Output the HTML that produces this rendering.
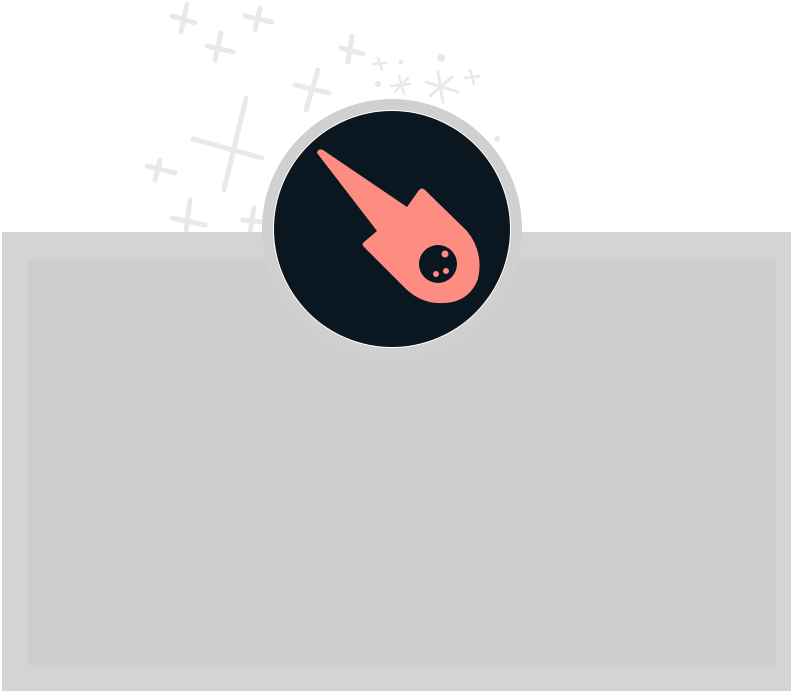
<!DOCTYPE html>
<html><head><style>
html,body{margin:0;padding:0;background:#fff;width:796px;height:693px;overflow:hidden}
</style></head><body>
<svg width="796" height="693" viewBox="0 0 796 693" xmlns="http://www.w3.org/2000/svg">
<g stroke="#e9e9e9" stroke-width="5" stroke-linecap="round" fill="none">
<path d="M187 4 L181 32 M172 16 L195 23"/>
<path d="M260 8 L255 30 M245 16 L272 22"/>
<path d="M221 33 L215 60 M207 46 L233 52"/>
<path d="M352 36 L348 62 M341 48 L363 54"/>
<path d="M318 70 L306 110 M295 85 L329 93"/>
<path d="M246 98 L224 190 M193 139 L262 158"/>
<path d="M160 160 L155 180 M147 166 L175 173"/>
<path d="M190 200 L186 232 M172 218 L205 225"/>
<path d="M254 208 L250 232 M243 220 L263 222"/>
<path d="M438 72 L443 102 M426 82 L458 92 M430 96 L452 77" stroke-width="3"/>
<path d="M399 76 L404 94 M391 86 L410 84 M395 92 L408 78" stroke-width="2.5"/>
<path d="M378 58 L382 70 M373 64 L386 63" stroke-width="2.5"/>
<path d="M470 70 L474 84 M465 78 L479 76" stroke-width="2.5"/>
</g>
<g fill="#e9e9e9"><circle cx="441" cy="58" r="4"/><circle cx="401" cy="62" r="2.5"/><circle cx="378" cy="84" r="3"/><circle cx="497" cy="139" r="3"/></g>
<rect x="2" y="232" width="789" height="459" fill="#d4d4d4"/>
<rect x="28" y="259" width="748" height="406" fill="#cecece"/>
<circle cx="392" cy="229" r="130" fill="#d0d0d0"/>
<circle cx="392" cy="229" r="119" fill="#ffffff"/>
<circle cx="392" cy="229" r="118" fill="#0a1620"/>
<path d="M317 153 Q318 148 323 150 L407 207 L419 190 Q422 187 425 190 L467 231 Q484 252 478 279 Q468 305 437 303 Q420 302 406 289 L364 247 Q361 244 364 242 L377 231 Z" fill="#fd8c83"/>
<circle cx="438" cy="264" r="19" fill="#0a1620"/>
<g fill="#fd8c83"><circle cx="445" cy="254" r="3.5"/><circle cx="446" cy="271" r="3"/><circle cx="436" cy="274" r="3"/></g>
</svg>
</body></html>
